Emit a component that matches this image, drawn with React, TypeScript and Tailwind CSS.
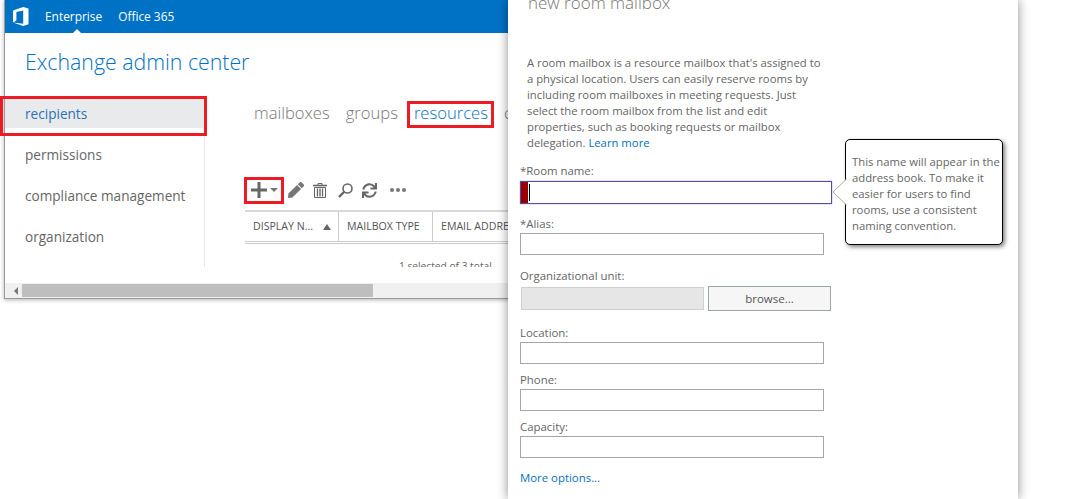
import { FaPen, FaSync } from "react-icons/fa";

const font = "font-['Open_Sans','Noto_Sans',sans-serif]";

/* ─── Office logo ─────────────────────────────────────────── */
function OfficeLogo() {
  return (
    <svg width="16" height="19" viewBox="0 0 16 19" fill="#fff">
      <path d="M0 3.6 10.2 0 15.5 1.6V17.2L10.2 19 0 15.4 10.2 16.7V3.4L3.4 4.9V13.6L0 15.4Z" />
    </svg>
  );
}

/* ─── Toolbar icons ───────────────────────────────────────── */
function PlusIcon() {
  return (
    <svg width="16" height="16" viewBox="0 0 16 16" fill="#666">
      <rect x="0" y="6.5" width="16" height="3" />
      <rect x="6.5" y="0" width="3" height="16" />
    </svg>
  );
}

function TrashIcon() {
  return (
    <svg width="14" height="15" viewBox="0 0 14 15" fill="none" stroke="#666">
      <path d="M0 2.5H14" strokeWidth="1.6" />
      <path d="M5 2V.5H9V2" />
      <path d="M1.5 4.5H12.5V14.5H1.5Z" />
      <path d="M4.5 5.5V13.5M7 5.5V13.5M9.5 5.5V13.5" strokeWidth="1.3" />
    </svg>
  );
}

function SearchIcon() {
  return (
    <svg width="15" height="15" viewBox="0 0 15 15" fill="none" stroke="#666">
      <circle cx="9.5" cy="5.5" r="4.5" strokeWidth="1.6" />
      <path d="M6 9 1 14" strokeWidth="2.4" />
    </svg>
  );
}

function Toolbar() {
  return (
    <div className="flex h-[26px] items-center">
      <div className="ml-[6px]">
        <PlusIcon />
      </div>
      <div className="ml-[3px] h-0 w-0 border-x-[4px] border-t-[4px] border-x-transparent border-t-[#777]" />
      <FaPen className="ml-[10px] text-[16px] text-[#777]" />
      <div className="ml-[9px]">
        <TrashIcon />
      </div>
      <div className="ml-[11px]">
        <SearchIcon />
      </div>
      <FaSync className="ml-[9px] text-[15px] text-[#666]" />
      <div className="ml-[13px] flex gap-[2px]">
        <span className="size-[4px] rounded-full bg-[#777]" />
        <span className="size-[4px] rounded-full bg-[#777]" />
        <span className="size-[4px] rounded-full bg-[#777]" />
      </div>
    </div>
  );
}

/* ─── Mailbox grid header ─────────────────────────────────── */
function GridHead() {
  return (
    <div className="mt-[7px] w-[300px] border-t-2 border-[#d8d8d8]">
      <div className="flex h-[29px] items-center text-[10.6px] text-[#555]">
        <div className="flex h-full w-[94px] shrink-0 items-center border-r border-[#ccc] pl-[8px]">
          <span>DISPLAY N...</span>
          <span className="ml-[10px] h-0 w-0 border-x-[4px] border-b-[6px] border-x-transparent border-b-[#666]" />
        </div>
        <div className="flex h-full w-[94px] shrink-0 items-center border-r border-[#ccc] pl-[8px]">
          MAILBOX TYPE
        </div>
        <div className="whitespace-nowrap pl-[8px]">EMAIL ADDRESS</div>
      </div>
      <div className="h-[3px] border-y border-[#ccc]" />
      <div className="mt-[14px] pl-[154px] text-[10.2px] leading-[16px] whitespace-nowrap text-[#666]">
        1 selected of 3 total
      </div>
    </div>
  );
}

/* ─── Admin center window behind the panel ────────────────── */
function AdminWindow() {
  const nav = ["permissions", "compliance management", "organization"];
  return (
    <div className="absolute top-0 left-[4px] flex h-[299px] w-[510px] flex-col overflow-hidden border-b border-l border-[#9a9a9a] bg-white shadow-[0_1px_4px_rgba(0,0,0,0.3)]">
      <header className="relative flex h-[33px] shrink-0 items-center bg-[#0072c6] text-[11.9px] text-white">
        <div className="ml-[8px]">
          <OfficeLogo />
        </div>
        <span className="ml-[16px]">Enterprise</span>
        <span className="ml-[16px]">Office 365</span>
        <span className="absolute bottom-0 left-[68px] h-0 w-0 border-x-[4px] border-b-[4px] border-x-transparent border-b-white" />
      </header>
      <h1 className="mt-[13px] ml-[20px] text-[21.3px] leading-[32px] font-light text-[#0072c6]">
        Exchange admin center
      </h1>
      <div className="mt-[21px] flex h-[168px] shrink-0 overflow-hidden">
        <nav className="w-[200px] shrink-0 border-r border-[#eaeaea] text-[13.6px] text-[#666]">
          <div className="flex h-[29px] items-center bg-[#e9eaeb] pt-[2px] pl-[20px] text-[#2a72b5]">
            recipients
          </div>
          {nav.map((item) => (
            <div key={item} className="mt-[12px] flex h-[29px] items-center pt-[2px] pl-[20px] whitespace-nowrap">
              {item}
            </div>
          ))}
        </nav>
        <div className="min-w-0 flex-1 pl-[40px]">
          <div className="flex h-[28px] items-center gap-[16px] pl-[9px] text-[16.6px] font-light whitespace-nowrap text-[#777]">
            <span>mailboxes</span>
            <span>groups</span>
            <span className="text-[#0072c6]">resources</span>
            <span>contacts</span>
          </div>
          <div className="mt-[50px]">
            <Toolbar />
          </div>
          <GridHead />
        </div>
      </div>
      <div className="mt-[16px] flex h-[15px] shrink-0 items-center bg-[#f0f0f0]">
        <span className="ml-[9px] h-0 w-0 border-y-[4px] border-r-[4px] border-y-transparent border-r-[#777]" />
        <span className="ml-[4px] h-[13px] w-[351px] bg-[#bebebe]" />
      </div>
    </div>
  );
}

/* ─── Form bits ───────────────────────────────────────────── */
function Field({ label, top }: { label: string; top: string }) {
  return (
    <div className={top}>
      <label className="block text-[11.4px] leading-[16px] text-[#666]">{label}</label>
      <input readOnly className="mt-[1px] block h-[22px] w-[304px] border border-[#a6a6a6] bg-white outline-none" />
    </div>
  );
}

function RoomNameField() {
  return (
    <div className="mt-[12px]">
      <label className="block text-[11.4px] leading-[16px] text-[#666]">*Room name:</label>
      <div className="mt-[2px] flex h-[23px] w-[312px] items-stretch border border-[#5b4a9e] shadow-[0_0_1px_#4a7fe0]">
        <span className="w-[7px] bg-[#990000]" />
        <span className="my-[2px] ml-[1px] w-px bg-black" />
      </div>
    </div>
  );
}

function NewRoomPanel() {
  return (
    <div className="absolute top-0 left-[508px] h-[499px] w-[510px] overflow-hidden bg-white pl-[12px] shadow-[0_0_10px_rgba(0,0,0,0.45)]">
      <h2 className="mt-[-11px] ml-[8px] text-[17px] leading-[28px] font-light text-[#777]">new room mailbox</h2>
      <p className="mt-[38px] ml-[7px] text-[11.3px] leading-[16px] whitespace-nowrap text-[#666]">
        A room mailbox is a resource mailbox that's assigned to
        <br />a physical location. Users can easily reserve rooms by
        <br />including room mailboxes in meeting requests. Just
        <br />select the room mailbox from the list and edit
        <br />properties, such as booking requests or mailbox
        <br />delegation. <span className="text-[#0072c6]">Learn more</span>
      </p>
      <RoomNameField />
      <Field label="*Alias:" top="mt-[12px]" />
      <div className="mt-[13px]">
        <label className="block text-[11.4px] leading-[16px] text-[#666]">Organizational unit:</label>
        <div className="mt-[2px] flex items-center">
          <div className="ml-px h-[23px] w-[183px] border border-[#cfcfcf] bg-[#e6e6e6]" />
          <button className="ml-[4px] h-[25px] w-[123px] border border-[#9aa6a6] bg-[#f6f6f6] text-[11.5px] text-[#555]">
            browse...
          </button>
        </div>
      </div>
      <Field label="Location:" top="mt-[14px]" />
      <Field label="Phone:" top="mt-[8px]" />
      <Field label="Capacity:" top="mt-[8px]" />
      <div className="mt-[12px] text-[11.4px] leading-[16px] text-[#0072c6]">More options...</div>
    </div>
  );
}

/* ─── Callout next to the room name field ─────────────────── */
function Callout() {
  return (
    <div className="absolute top-[139px] left-[845px] h-[106px] w-[158px] rounded-[5px] border border-black bg-white pt-[14px] pl-[6px] text-[11.3px] leading-[16px] whitespace-nowrap text-[#666] shadow-[2px_2px_4px_rgba(0,0,0,0.5)]">
      <svg className="absolute top-[37px] left-[-14px]" width="15" height="30" viewBox="0 0 15 30" fill="#fff" stroke="#aaa">
        <path d="M14.5 2 1 15 14.5 28" />
        <path d="M15 3V27" stroke="#fff" strokeWidth="2" />
      </svg>
      This name will appear in the
      <br />
      address book. To make it
      <br />
      easier for users to find
      <br />
      rooms, use a consistent
      <br />
      naming convention.
    </div>
  );
}

export default function App() {
  return (
    <div className={`relative h-[499px] w-[1066px] overflow-hidden bg-white ${font}`}>
      <AdminWindow />
      <NewRoomPanel />
      <Callout />
      {/* red annotation boxes drawn on top of the screenshot */}
      <div className="absolute top-[96px] left-0 h-[40px] w-[207px] border-[3px] border-[#ed1c24]" />
      <div className="absolute top-[101px] left-[407px] h-[27px] w-[87px] border-[3px] border-[#ed1c24]" />
      <div className="absolute top-[177px] left-[244px] h-[27px] w-[40px] border-[3px] border-[#ed1c24]" />
    </div>
  );
}
